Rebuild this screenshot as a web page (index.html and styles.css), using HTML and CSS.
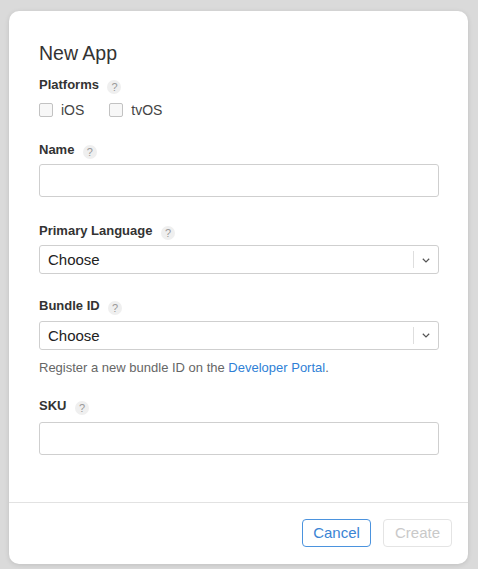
FILE: index.html
```html
<!DOCTYPE html>
<html lang="en">
<head>
<meta charset="utf-8">
<title>New App</title>
<link rel="stylesheet" href="styles.css">
</head>
<body>
<div class="card">
  <div class="body">
    <h1 class="title">New App</h1>

    <div class="group first">
      <div class="label">Platforms <span class="help">?</span></div>
      <div class="checks">
        <label class="check"><span class="box"></span>iOS</label>
        <label class="check"><span class="box"></span>tvOS</label>
      </div>
    </div>

    <div class="group g-name">
      <div class="label">Name <span class="help">?</span></div>
      <div class="input"></div>
    </div>

    <div class="group g-lang">
      <div class="label">Primary Language <span class="help">?</span></div>
      <div class="select">
        <span class="value">Choose</span>
        <span class="sep"></span>
        <span class="arrow"><svg width="8" height="5" viewBox="0 0 8 5"><path d="M0.8 0.8 L4 3.9 L7.2 0.8" fill="none" stroke="#555" stroke-width="1.2"/></svg></span>
      </div>
    </div>

    <div class="group g-bundle">
      <div class="label">Bundle ID <span class="help">?</span></div>
      <div class="select">
        <span class="value">Choose</span>
        <span class="sep"></span>
        <span class="arrow"><svg width="8" height="5" viewBox="0 0 8 5"><path d="M0.8 0.8 L4 3.9 L7.2 0.8" fill="none" stroke="#555" stroke-width="1.2"/></svg></span>
      </div>
      <p class="hint">Register a new bundle ID on the <a class="link">Developer Portal</a>.</p>
    </div>

    <div class="group g-sku">
      <div class="label">SKU <span class="help">?</span></div>
      <div class="input"></div>
    </div>
  </div>
  <div class="footer">
    <button class="btn btn-cancel">Cancel</button>
    <button class="btn btn-create">Create</button>
  </div>
</div>
</body>
</html>
```
FILE: styles.css
```css
html, body {
  margin: 0;
  padding: 0;
}
body {
  background: #dadada;
  font-family: "Liberation Sans", Arial, sans-serif;
  color: #333;
  padding: 11px 10px 6px 9px;
  height: 569px;
  box-sizing: border-box;
}
.card {
  width: 459px;
  background: #fff;
  border-radius: 10px;
  box-shadow: 0 1px 5px rgba(0, 0, 0, 0.12);
}
.body {
  padding: 30px 29px 47.5px 30px;
  border-bottom: 1px solid #e2e2e2;
}
.title {
  margin: 0;
  font-size: 19.5px;
  line-height: 24px;
  font-weight: normal;
  color: #333;
}
.group.first { margin-top: 11.5px; }
.g-name { margin-top: 24.5px; }
.g-lang { margin-top: 25.5px; }
.g-bundle { margin-top: 23.5px; }
.g-sku { margin-top: 22px; }

.label {
  display: flex;
  align-items: center;
  height: 16px;
  font-size: 13px;
  line-height: 16px;
  font-weight: bold;
  color: #333;
  margin-bottom: 6.5px;
}
.first .label { margin-bottom: 10.5px; }
.g-bundle .label { margin-bottom: 7px; }
.g-sku .label { margin-bottom: 7.5px; }

.help {
  display: inline-flex;
  align-items: center;
  justify-content: center;
  flex: none;
  width: 14px;
  height: 14px;
  border-radius: 50%;
  background: #efefef;
  color: #999;
  font-size: 11px;
  line-height: 14px;
  font-weight: normal;
  margin-left: 8.5px;
  margin-top: 4px;
}

.checks {
  display: flex;
  align-items: center;
  height: 14px;
}
.check {
  display: flex;
  align-items: center;
  font-size: 14px;
  line-height: 14px;
  color: #444;
  margin-right: 25px;
}
.box {
  width: 12px;
  height: 12px;
  border: 1px solid #c2c2c2;
  border-radius: 2px;
  background: #f7f7f7;
  margin-right: 8px;
}

.input {
  height: 33px;
  border: 1px solid #cfcfcf;
  border-radius: 3px;
  box-sizing: border-box;
  background: #fff;
}

.select {
  display: flex;
  align-items: center;
  height: 29px;
  border: 1px solid #cfcfcf;
  border-radius: 3px;
  box-sizing: border-box;
  background: #fff;
}
.value {
  flex: 1;
  padding-left: 8px;
  font-size: 15px;
  color: #222;
}
.sep {
  width: 1px;
  height: 17px;
  background: #dedede;
}
.arrow {
  width: 24px;
  display: flex;
  justify-content: center;
  align-items: center;
  padding-top: 1px;
}

.hint {
  margin: 10.5px 0 0;
  font-size: 13px;
  line-height: 16px;
  color: #666;
}
.link {
  color: #2f7fd6;
}

.footer {
  display: flex;
  justify-content: flex-end;
  gap: 12px;
  padding: 15.5px 16px 17px;
}
.btn {
  width: 69px;
  height: 28px;
  font-family: "Liberation Sans", Arial, sans-serif;
  font-size: 15px;
  background: #fff;
  border-radius: 4px;
  padding: 0;
}
.btn-cancel {
  border: 1px solid #4b93de;
  color: #3a84d4;
}
.btn-create {
  border: 1px solid #e4e4e4;
  color: #c9c9c9;
}
```
